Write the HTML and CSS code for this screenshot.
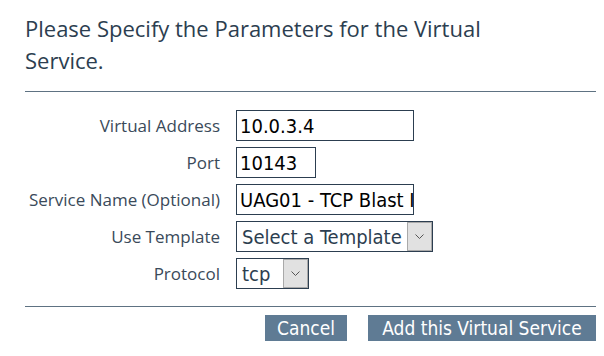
FILE: index.html
```html
<!DOCTYPE html>
<html lang="en">
<head>
  <meta charset="UTF-8">
  <title>Virtual Service</title>
  <link rel="stylesheet" href="styles.css">
</head>
<body>
  <div class="panel">
    <h1 class="title">Please Specify the Parameters for the Virtual Service.</h1>
    <hr class="rule">

    <form class="vs-form">
      <label class="field-label" for="vaddr">Virtual Address</label>
      <div><input class="field-input wide" id="vaddr" type="text" value="10.0.3.4"></div>

      <label class="field-label" for="port">Port</label>
      <div><input class="field-input short" id="port" type="text" value="10143"></div>

      <label class="field-label" for="sname">Service Name (Optional)</label>
      <div><input class="field-input wide" id="sname" type="text" value="UAG01 - TCP Blast Inbound"></div>

      <label class="field-label" for="tmpl">Use Template</label>
      <div>
        <span class="select-box">
          <select id="tmpl" class="tmpl">
            <option>Select a Template</option>
          </select>
          <span class="select-arrow">
            <svg width="9" height="5" viewBox="0 0 9 5"><path d="M0.5 0.5 L4.5 4.5 L8.5 0.5" fill="none" stroke="#555" stroke-width="1"/></svg>
          </span>
        </span>
      </div>

      <label class="field-label" for="proto">Protocol</label>
      <div>
        <span class="select-box">
          <select id="proto" class="proto">
            <option>tcp</option>
            <option>udp</option>
          </select>
          <span class="select-arrow">
            <svg width="9" height="5" viewBox="0 0 9 5"><path d="M0.5 0.5 L4.5 4.5 L8.5 0.5" fill="none" stroke="#555" stroke-width="1"/></svg>
          </span>
        </span>
      </div>
    </form>

    <hr class="rule">

    <div class="actions">
      <button class="btn cancel" type="button">Cancel</button>
      <button class="btn add" type="button">Add this Virtual Service</button>
    </div>
  </div>
</body>
</html>
```

FILE: styles.css
```css
body {
  margin: 0;
  background: #ffffff;
  font-family: 'Open Sans', 'Noto Sans', sans-serif;
  color: #3a4a5a;
}

.panel {
  padding: 0 8px 0 25px;
}

.title {
  margin: 12px 0 0;
  max-width: 500px;
  font-size: 22px;
  line-height: 32px;
  font-weight: normal;
  color: #2c3e50;
}

.rule {
  margin: 15px 0 0;
  border: none;
  border-top: 1px solid #5e7282;
  height: 0;
}

.vs-form {
  display: grid;
  grid-template-columns: 195px auto;
  column-gap: 16px;
  row-gap: 6px;
  align-items: center;
  margin: 18px 0 17px;
}

.field-label {
  text-align: right;
  font-size: 17px;
  color: #3a4a5a;
}

.field-input {
  display: block;
  box-sizing: border-box;
  height: 31px;
  padding: 0 0 0 3px;
  border: 1px solid #2c3e50;
  font-family: 'DejaVu Sans Condensed', 'DejaVu Sans', sans-serif;
  font-size: 20px;
  color: #000;
  background: #fff;
  outline: none;
}

.wide {
  width: 178px;
}

.short {
  width: 80px;
}

.select-box {
  display: inline-flex;
  height: 31px;
  box-sizing: border-box;
  border: 1px solid #2c3e50;
  background: #fff;
  vertical-align: top;
}

.select-box select {
  appearance: none;
  -webkit-appearance: none;
  border: none;
  outline: none;
  background: #fff;
  padding: 0 5px;
  font-family: 'DejaVu Sans Condensed', 'DejaVu Sans', sans-serif;
  font-size: 20px;
  color: #2c3e50;
}

.tmpl {
  width: 170px;
}

.proto {
  width: 46px;
}

.select-arrow {
  display: flex;
  align-items: center;
  justify-content: center;
  width: 25px;
  box-sizing: border-box;
  background: #e1e1e1;
  border: 1px solid #a9a9a9;
}

.actions {
  display: flex;
  justify-content: flex-end;
  gap: 21px;
  margin-top: 8px;
}

.btn {
  height: 26px;
  padding: 0;
  border: none;
  background: #5f7b94;
  color: #fff;
  font-family: 'DejaVu Sans Condensed', 'DejaVu Sans', sans-serif;
  font-size: 19px;
  cursor: pointer;
}

.cancel {
  width: 82px;
}

.add {
  width: 228px;
}
```
